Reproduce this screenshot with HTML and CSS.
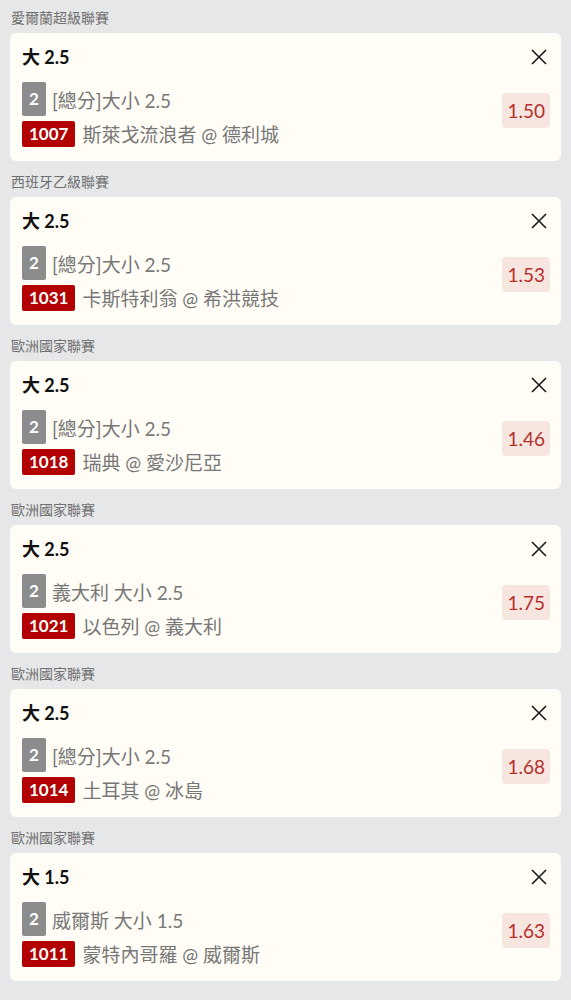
FILE: index.html
```html
<!DOCTYPE html>
<html lang="zh-Hant">
<head>
    <meta charset="UTF-8">
    <meta name="viewport" content="width=device-width, initial-scale=1.0">
    <title>投注單</title>
    <link rel="stylesheet" href="styles.css">
</head>
<body>
    <div class="slip">
        <div class="group">
            <div class="league">愛爾蘭超級聯賽</div>
            <div class="bet">
                <div class="bet-head">
                    <span class="pick">大 2.5</span>
                    <button class="close" aria-label="remove">
                        <svg viewBox="0 0 16 16" width="16" height="16"><path d="M1 1L15 15M15 1L1 15" /></svg>
                    </button>
                </div>
                <div class="bet-body">
                    <div class="lines">
                        <div class="line"><span class="tag tag-gray">2</span><span class="market">[總分]大小 2.5</span></div>
                        <div class="line"><span class="tag tag-red">1007</span><span class="match">斯萊戈流浪者 @ 德利城</span></div>
                    </div>
                    <span class="odds">1.50</span>
                </div>
            </div>
        </div>

        <div class="group">
            <div class="league">西班牙乙級聯賽</div>
            <div class="bet">
                <div class="bet-head">
                    <span class="pick">大 2.5</span>
                    <button class="close" aria-label="remove">
                        <svg viewBox="0 0 16 16" width="16" height="16"><path d="M1 1L15 15M15 1L1 15" /></svg>
                    </button>
                </div>
                <div class="bet-body">
                    <div class="lines">
                        <div class="line"><span class="tag tag-gray">2</span><span class="market">[總分]大小 2.5</span></div>
                        <div class="line"><span class="tag tag-red">1031</span><span class="match">卡斯特利翁 @ 希洪競技</span></div>
                    </div>
                    <span class="odds">1.53</span>
                </div>
            </div>
        </div>

        <div class="group">
            <div class="league">歐洲國家聯賽</div>
            <div class="bet">
                <div class="bet-head">
                    <span class="pick">大 2.5</span>
                    <button class="close" aria-label="remove">
                        <svg viewBox="0 0 16 16" width="16" height="16"><path d="M1 1L15 15M15 1L1 15" /></svg>
                    </button>
                </div>
                <div class="bet-body">
                    <div class="lines">
                        <div class="line"><span class="tag tag-gray">2</span><span class="market">[總分]大小 2.5</span></div>
                        <div class="line"><span class="tag tag-red">1018</span><span class="match">瑞典 @ 愛沙尼亞</span></div>
                    </div>
                    <span class="odds">1.46</span>
                </div>
            </div>
        </div>

        <div class="group">
            <div class="league">歐洲國家聯賽</div>
            <div class="bet">
                <div class="bet-head">
                    <span class="pick">大 2.5</span>
                    <button class="close" aria-label="remove">
                        <svg viewBox="0 0 16 16" width="16" height="16"><path d="M1 1L15 15M15 1L1 15" /></svg>
                    </button>
                </div>
                <div class="bet-body">
                    <div class="lines">
                        <div class="line"><span class="tag tag-gray">2</span><span class="market">義大利 大小 2.5</span></div>
                        <div class="line"><span class="tag tag-red">1021</span><span class="match">以色列 @ 義大利</span></div>
                    </div>
                    <span class="odds">1.75</span>
                </div>
            </div>
        </div>

        <div class="group">
            <div class="league">歐洲國家聯賽</div>
            <div class="bet">
                <div class="bet-head">
                    <span class="pick">大 2.5</span>
                    <button class="close" aria-label="remove">
                        <svg viewBox="0 0 16 16" width="16" height="16"><path d="M1 1L15 15M15 1L1 15" /></svg>
                    </button>
                </div>
                <div class="bet-body">
                    <div class="lines">
                        <div class="line"><span class="tag tag-gray">2</span><span class="market">[總分]大小 2.5</span></div>
                        <div class="line"><span class="tag tag-red">1014</span><span class="match">土耳其 @ 冰島</span></div>
                    </div>
                    <span class="odds">1.68</span>
                </div>
            </div>
        </div>

        <div class="group">
            <div class="league">歐洲國家聯賽</div>
            <div class="bet">
                <div class="bet-head">
                    <span class="pick">大 1.5</span>
                    <button class="close" aria-label="remove">
                        <svg viewBox="0 0 16 16" width="16" height="16"><path d="M1 1L15 15M15 1L1 15" /></svg>
                    </button>
                </div>
                <div class="bet-body">
                    <div class="lines">
                        <div class="line"><span class="tag tag-gray">2</span><span class="market">威爾斯 大小 1.5</span></div>
                        <div class="line"><span class="tag tag-red">1011</span><span class="match">蒙特內哥羅 @ 威爾斯</span></div>
                    </div>
                    <span class="odds">1.63</span>
                </div>
            </div>
        </div>
    </div>
</body>
</html>
```

FILE: styles.css
```css
body {
    margin: 0;
    padding: 0;
    background-color: #e6e7e9;
    font-family: "Lato", "Noto Sans CJK TC", sans-serif;
}

.slip {
    padding-bottom: 20px;
}

.group {
    padding: 8px 10px 0;
}

.group + .group {
    margin-top: 3px;
}

.league {
    font-size: 14px;
    line-height: 20px;
    color: #707070;
    padding-left: 1px;
    margin-bottom: 5px;
}

.bet {
    background-color: #fffdf6;
    border-radius: 6px;
    padding: 12px 11px 14px 12px;
}

.bet-head {
    display: flex;
    align-items: center;
    justify-content: space-between;
    height: 24px;
    margin-bottom: 13px;
}

.pick {
    font-size: 18px;
    font-weight: bold;
    color: #111;
    line-height: 24px;
}

.close {
    background: none;
    border: none;
    padding: 0;
    margin-right: 3px;
    width: 16px;
    height: 16px;
    cursor: pointer;
}

.close svg {
    display: block;
    stroke: #1a1a1a;
    stroke-width: 1.6;
    fill: none;
}

.bet-body {
    display: flex;
    align-items: center;
    justify-content: space-between;
}

.lines {
    display: flex;
    flex-direction: column;
    gap: 4px;
}

.line {
    display: flex;
    align-items: center;
    gap: 6px;
    font-size: 19px;
    color: #777;
}

.tag {
    display: inline-block;
    color: #fff;
    font-weight: bold;
    font-size: 17px;
    text-align: center;
    border-radius: 2px;
    padding: 0 7px;
}

.tag-gray {
    background-color: #8c8c8c;
    line-height: 34px;
    min-width: 10px;
}

.tag-red {
    background-color: #b30000;
    line-height: 26px;
}

.match {
    margin-left: 1px;
}

.odds {
    background-color: #f7e5df;
    color: #b52f2c;
    font-size: 19px;
    line-height: 35px;
    padding: 0 5px;
    border-radius: 4px;
    margin-top: -8px;
}
```
